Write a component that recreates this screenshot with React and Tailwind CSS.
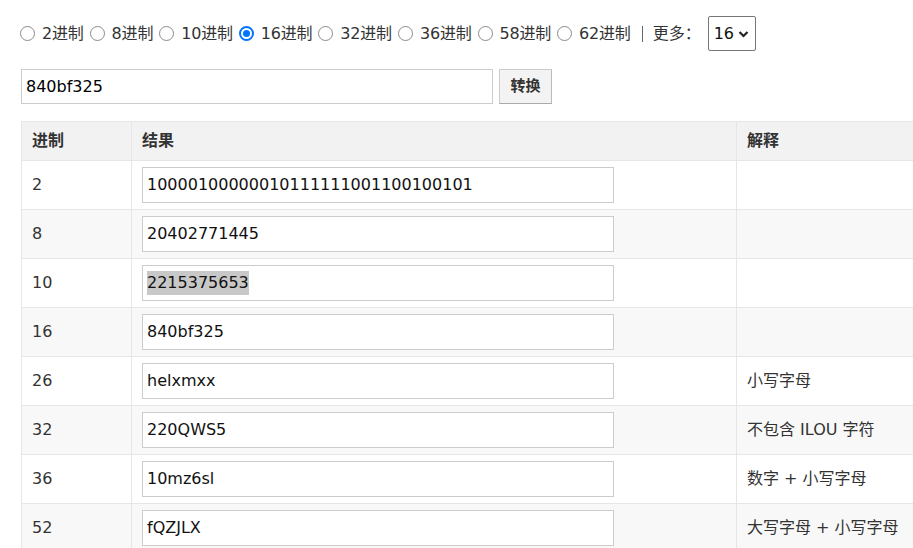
import React from 'react';

const bases = ['2', '8', '10', '16', '32', '36', '58', '62'];

const rows = [
  { base: '2', value: '10000100000010111111001100100101', note: '' },
  { base: '8', value: '20402771445', note: '' },
  { base: '10', value: '2215375653', note: '', selected: true },
  { base: '16', value: '840bf325', note: '' },
  { base: '26', value: 'helxmxx', note: '小写字母' },
  { base: '32', value: '220QWS5', note: '不包含 ILOU 字符' },
  { base: '36', value: '10mz6sl', note: '数字 + 小写字母' },
  { base: '52', value: 'fQZJLX', note: '大写字母 + 小写字母' },
];

const Radio = ({ checked }) =>
  checked ? (
    <span className="w-[15px] h-[15px] rounded-full border-[2px] border-[#0075ff] flex items-center justify-center mr-[7px]">
      <span className="w-[7px] h-[7px] rounded-full bg-[#0075ff]"></span>
    </span>
  ) : (
    <span className="w-[15px] h-[15px] rounded-full border border-[#8a8a8a] bg-white mr-[7px]"></span>
  );

const App = () => {
  return (
    <div className="w-[913px] h-[548px] overflow-hidden bg-white text-[#333] text-[16px] font-['DejaVu_Sans','Noto_Sans_CJK_SC',sans-serif]">
      {/* Base picker */}
      <div className="flex items-center pl-[20px] pt-[16px] h-[51px]">
        {bases.map((b) => (
          <label key={b} className="flex items-center mr-[6px] leading-none">
            <Radio checked={b === '16'} />
            <span className="tracking-[-0.2px]">{b}进制</span>
          </label>
        ))}
        <span className="ml-[5px] w-px h-[16px] bg-[#666]"></span>
        <span className="ml-[10px]">更多：</span>
        <div className="ml-[7px] flex items-center w-[48px] h-[35px] border border-[#767676] rounded-[2px] pl-[5px] text-[#111]">
          <span>16</span>
          <svg className="ml-[4px]" width="11" height="8" viewBox="0 0 11 8">
            <path d="M1.5 2 L5.5 6 L9.5 2" fill="none" stroke="#222" strokeWidth="2.2" />
          </svg>
        </div>
      </div>

      {/* Input row */}
      <div className="flex items-center pl-[21px] mt-[18px]">
        <div className="w-[472px] h-[35px] border border-[#ccc] flex items-center px-[4px] text-black">
          840bf325
        </div>
        <button className="ml-[6px] w-[53px] h-[35px] bg-[#f3f3f3] border border-[#ccc] border-b-[#aaa] border-r-[#bbb] text-[15px] font-bold text-[#333]">
          转换
        </button>
      </div>

      {/* Result table */}
      <table className="ml-[21px] mt-[17px] w-[1000px] border-collapse table-fixed">
        <thead>
          <tr className="bg-[#f2f2f2]">
            <th className="w-[110px] border border-[#e6e6e6] h-[39px] px-[10px] text-left font-bold">进制</th>
            <th className="w-[605px] border border-[#e6e6e6] px-[10px] text-left font-bold">结果</th>
            <th className="border border-[#e6e6e6] px-[10px] text-left font-bold">解释</th>
          </tr>
        </thead>
        <tbody>
          {rows.map((r, i) => (
            <tr key={r.base} className={i % 2 === 1 ? 'bg-[#f8f8f8]' : 'bg-white'}>
              <td className="border border-[#e6e6e6] h-[49px] px-[10px]">{r.base}</td>
              <td className="border border-[#e6e6e6] px-[10px] py-[6px]">
                <div className="w-[472px] h-[36px] border border-[#ccc] bg-white flex items-center px-[4px] text-[#111]">
                  {r.selected ? <span className="bg-[#c8c8c8]">{r.value}</span> : r.value}
                </div>
              </td>
              <td className="border border-[#e6e6e6] px-[10px] whitespace-pre">{r.note}</td>
            </tr>
          ))}
        </tbody>
      </table>
    </div>
  );
};

export default App;
